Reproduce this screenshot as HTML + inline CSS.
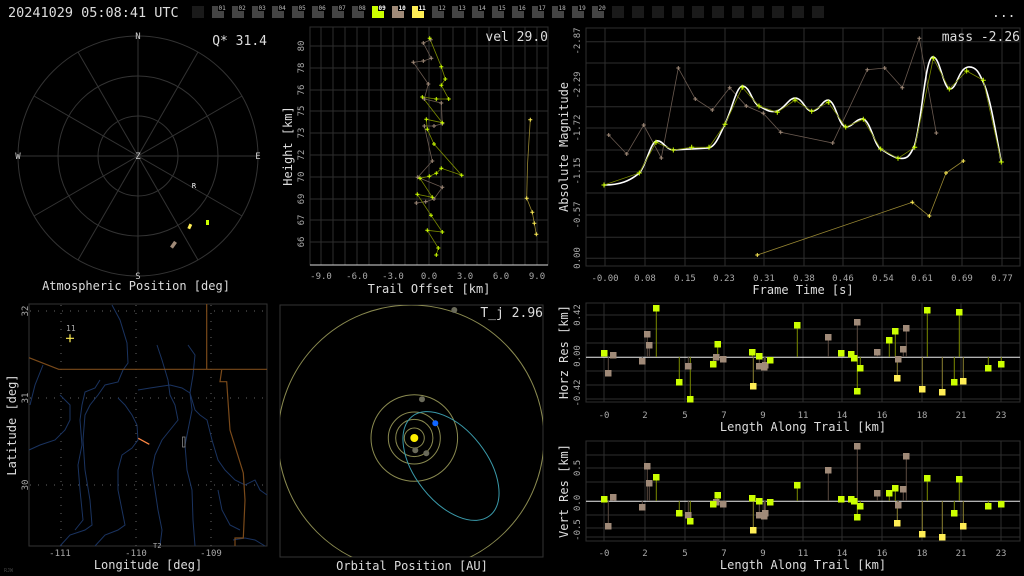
<!DOCTYPE html>
<html><head><meta charset="utf-8"><style>
html,body{margin:0;padding:0;background:#000;}
svg{display:block;}
text{font-family:"DejaVu Sans Mono","Liberation Mono",monospace;}
.t{fill:#aaa;font-size:9px;}
.l{fill:#ddd;font-size:12px;}
.g{stroke:#2e2e2e;stroke-width:1;fill:none;}
</style></head><body>
<svg width="1024" height="576" viewBox="0 0 1024 576" xmlns="http://www.w3.org/2000/svg">
<rect width="1024" height="576" fill="#000"/>
<!-- top bar -->
<text x="8" y="17" fill="#ddd" font-size="13.5">20241029 05:08:41 UTC</text>
<g>
<rect x="192" y="6" width="12" height="12" fill="#1a1a1a"/>
<g fill="#444">
<rect x="212" y="6" width="12" height="12"/><rect x="232" y="6" width="12" height="12"/><rect x="252" y="6" width="12" height="12"/><rect x="272" y="6" width="12" height="12"/><rect x="292" y="6" width="12" height="12"/><rect x="312" y="6" width="12" height="12"/><rect x="332" y="6" width="12" height="12"/><rect x="352" y="6" width="12" height="12"/>
<rect x="432" y="6" width="12" height="12"/><rect x="452" y="6" width="12" height="12"/><rect x="472" y="6" width="12" height="12"/><rect x="492" y="6" width="12" height="12"/><rect x="512" y="6" width="12" height="12"/><rect x="532" y="6" width="12" height="12"/><rect x="552" y="6" width="12" height="12"/><rect x="572" y="6" width="12" height="12"/><rect x="592" y="6" width="12" height="12"/>
</g>
<rect x="372" y="6" width="12" height="12" fill="#ccff00"/>
<rect x="392" y="6" width="12" height="12" fill="#a08a78"/>
<rect x="412" y="6" width="12" height="12" fill="#ffee55"/>
<g fill="#1a1a1a">
<rect x="612" y="6" width="12" height="12"/><rect x="632" y="6" width="12" height="12"/><rect x="652" y="6" width="12" height="12"/><rect x="672" y="6" width="12" height="12"/><rect x="692" y="6" width="12" height="12"/><rect x="712" y="6" width="12" height="12"/><rect x="732" y="6" width="12" height="12"/><rect x="752" y="6" width="12" height="12"/><rect x="772" y="6" width="12" height="12"/><rect x="792" y="6" width="12" height="12"/><rect x="812" y="6" width="12" height="12"/>
</g>
<g fill="#000">
<rect x="218" y="4" width="9" height="7"/><rect x="238" y="4" width="9" height="7"/><rect x="258" y="4" width="9" height="7"/><rect x="278" y="4" width="9" height="7"/><rect x="298" y="4" width="9" height="7"/><rect x="318" y="4" width="9" height="7"/><rect x="338" y="4" width="9" height="7"/><rect x="358" y="4" width="9" height="7"/><rect x="378" y="4" width="9" height="7"/><rect x="398" y="4" width="9" height="7"/><rect x="418" y="4" width="9" height="7"/><rect x="438" y="4" width="9" height="7"/><rect x="458" y="4" width="9" height="7"/><rect x="478" y="4" width="9" height="7"/><rect x="498" y="4" width="9" height="7"/><rect x="518" y="4" width="9" height="7"/><rect x="538" y="4" width="9" height="7"/><rect x="558" y="4" width="9" height="7"/><rect x="578" y="4" width="9" height="7"/><rect x="598" y="4" width="9" height="7"/>
</g>
<g fill="#bbb" font-size="6px">
<text x="218.5" y="10">01</text><text x="238.5" y="10">02</text><text x="258.5" y="10">03</text><text x="278.5" y="10">04</text><text x="298.5" y="10">05</text><text x="318.5" y="10">06</text><text x="338.5" y="10">07</text><text x="358.5" y="10">08</text>
<text x="378.5" y="10" fill="#fff" font-weight="bold">09</text><text x="398.5" y="10" fill="#fff" font-weight="bold">10</text><text x="418.5" y="10" fill="#fff" font-weight="bold">11</text>
<text x="438.5" y="10">12</text><text x="458.5" y="10">13</text><text x="478.5" y="10">14</text><text x="498.5" y="10">15</text><text x="518.5" y="10">16</text><text x="538.5" y="10">17</text><text x="558.5" y="10">18</text><text x="578.5" y="10">19</text><text x="598.5" y="10">20</text>
</g>
<text x="992" y="17" fill="#ddd" font-size="13">...</text>
</g>

<!-- Panel 1 polar -->
<g stroke="#333" fill="none" stroke-width="1">
<circle cx="138" cy="156" r="40"/><circle cx="138" cy="156" r="80"/><circle cx="138" cy="156" r="120"/>
<line x1="138" y1="36" x2="138" y2="276"/><line x1="18" y1="156" x2="258" y2="156"/>
<line x1="78" y1="52" x2="198" y2="260"/><line x1="198" y1="52" x2="78" y2="260"/>
<line x1="34" y1="96" x2="242" y2="216"/><line x1="34" y1="216" x2="242" y2="96"/>
</g>
<g fill="#ccc" font-size="9px" text-anchor="middle">
<text x="138" y="39">N</text><text x="138" y="279">S</text><text x="18" y="159">W</text><text x="258" y="159">E</text><text x="138" y="159">Z</text>
<text x="194" y="188" font-size="7px" fill="#fff">R</text>
</g>
<rect x="206" y="220" width="3" height="5" fill="#ccff00"/>
<rect x="188.5" y="224" width="3" height="5" fill="#ffee55" transform="rotate(25 190 226)"/>
<rect x="171.5" y="241" width="3.5" height="7" fill="#a08a78" transform="rotate(35 173 245)"/>
<text x="267" y="45" fill="#ddd" font-size="13" text-anchor="end">Q* 31.4</text>
<text x="136" y="290" class="l" text-anchor="middle">Atmospheric Position [deg]</text>

<!-- Panel 2 trail offset -->
<rect x="310" y="27" width="238" height="238" fill="none" stroke="#2e2e2e"/>
<g class="g">
<path d="M321,27V265M333,27V265M345,27V265M357,27V265M369,27V265M381,27V265M393,27V265M405,27V265M417,27V265M429,27V265M441,27V265M453,27V265M465,27V265M477,27V265M489,27V265M501,27V265M513,27V265M525,27V265M537,27V265"/>
<path d="M310,46H548M310,68H548M310,90H548M310,111H548M310,133H548M310,155H548M310,177H548M310,199H548M310,220H548M310,242H548"/>
</g>
<line x1="310" y1="265" x2="548" y2="265" stroke="#ddd"/>
<g class="t" text-anchor="middle">
<text x="321" y="279">-9.0</text><text x="357" y="279">-6.0</text><text x="393" y="279">-3.0</text><text x="429" y="279">0.0</text><text x="465" y="279">3.0</text><text x="501" y="279">6.0</text><text x="537" y="279">9.0</text>
</g>
<g class="t" text-anchor="middle">
<text transform="translate(304,46) rotate(-90)">80</text><text transform="translate(304,68) rotate(-90)">78</text><text transform="translate(304,90) rotate(-90)">76</text><text transform="translate(304,111) rotate(-90)">75</text><text transform="translate(304,133) rotate(-90)">73</text><text transform="translate(304,155) rotate(-90)">72</text><text transform="translate(304,177) rotate(-90)">70</text><text transform="translate(304,199) rotate(-90)">69</text><text transform="translate(304,220) rotate(-90)">67</text><text transform="translate(304,242) rotate(-90)">66</text>
</g>
<text transform="translate(292,146) rotate(-90)" class="l" text-anchor="middle">Height [km]</text>
<text x="429" y="293" class="l" text-anchor="middle">Trail Offset [km]</text>
<polyline fill="none" stroke="#6a5a50" stroke-width="0.8" points="430.7,39.7 423.3,43 431.3,58.3 423.3,61 413.3,62.3 428.3,84 424.3,99 441.3,103 442.3,123.7 434,126 424.3,126 432.3,161 417.7,177.3 442.3,187.3 434,199 425.7,201.7 416.3,203"/>
<polyline fill="none" stroke="#7a8a00" stroke-width="0.8" points="429.7,38.3 441.3,66.7 445.3,79 441.3,85.3 448.7,99 436.3,99 422.3,97 442.3,122.7 426.3,119.3 427.3,129.3 434,144 461.7,175.3 441.3,168.3 436.3,173.3 429.3,176.3 420,178.3 432.3,197.3 417.3,194.3 431,215.3 442.3,232 427.3,230.3 438.3,248 436.3,255"/>
<polyline fill="none" stroke="#998833" stroke-width="0.8" points="530.3,119.7 529,140 527.5,165 526.7,198.3 532.3,212.3 534.3,223.3 536.3,234.3"/>
<g stroke-width="1" fill="none">
<path stroke="#a08a78" d="M428.7,39.7h4M430.7,37.7v4M421.3,43h4M423.3,41v4M429.3,58.3h4M431.3,56.3v4M421.3,61h4M423.3,59v4M411.3,62.3h4M413.3,60.3v4M426.3,84h4M428.3,82v4M422.3,99h4M424.3,97v4M439.3,103h4M441.3,101v4M440.3,123.7h4M442.3,121.7v4M432,126h4M434,124v4M422.3,126h4M424.3,124v4M430.3,161h4M432.3,159v4M415.7,177.3h4M417.7,175.3v4M440.3,187.3h4M442.3,185.3v4M432,199h4M434,197v4M423.7,201.7h4M425.7,199.7v4M414.3,203h4M416.3,201v4"/>
<path stroke="#ccff00" d="M427.7,38.3h4M429.7,36.3v4M439.3,66.7h4M441.3,64.7v4M443.3,79h4M445.3,77v4M439.3,85.3h4M441.3,83.3v4M446.7,99h4M448.7,97v4M434.3,99h4M436.3,97v4M420.3,97h4M422.3,95v4M440.3,122.7h4M442.3,120.7v4M424.3,119.3h4M426.3,117.3v4M425.3,129.3h4M427.3,127.3v4M432,144h4M434,142v4M459.7,175.3h4M461.7,173.3v4M439.3,168.3h4M441.3,166.3v4M434.3,173.3h4M436.3,171.3v4M427.3,176.3h4M429.3,174.3v4M418,178.3h4M420,176.3v4M430.3,197.3h4M432.3,195.3v4M415.3,194.3h4M417.3,192.3v4M429,215.3h4M431,213.3v4M440.3,232h4M442.3,230v4M425.3,230.3h4M427.3,228.3v4M436.3,248h4M438.3,246v4M434.3,255h4M436.3,253v4"/>
<path stroke="#ffee55" d="M528.3,119.7h4M530.3,117.7v4M524.7,198.3h4M526.7,196.3v4M530.3,212.3h4M532.3,210.3v4M532.3,223.3h4M534.3,221.3v4M534.3,234.3h4M536.3,232.3v4"/>
</g>
<text x="548" y="41" fill="#ddd" font-size="13" text-anchor="end">vel 29.0</text>

<!-- Panel 3 magnitude -->
<rect x="586" y="28" width="434" height="238" fill="none" stroke="#2e2e2e"/>
<g class="g">
<path d="M605,28V266M645,28V266M685,28V266M725,28V266M764,28V266M804,28V266M843,28V266M883,28V266M922,28V266M962,28V266M1002,28V266"/>
<path d="M586,41.7H1020M586,63H1020M586,85H1020M586,106.7H1020M586,128H1020M586,150H1020M586,171.7H1020M586,193H1020M586,215H1020M586,237.3H1020M586,258.3H1020"/>
</g>
<g class="t" text-anchor="middle">
<text x="605" y="281">-0.00</text><text x="645" y="281">0.08</text><text x="685" y="281">0.15</text><text x="724" y="281">0.23</text><text x="764" y="281">0.31</text><text x="804" y="281">0.38</text><text x="843" y="281">0.46</text><text x="883" y="281">0.54</text><text x="922" y="281">0.61</text><text x="962" y="281">0.69</text><text x="1002" y="281">0.77</text>
<text transform="translate(580,41) rotate(-90)">-2.87</text><text transform="translate(580,85) rotate(-90)">-2.29</text><text transform="translate(580,128) rotate(-90)">-1.72</text><text transform="translate(580,171) rotate(-90)">-1.15</text><text transform="translate(580,215) rotate(-90)">-0.57</text><text transform="translate(580,258) rotate(-90)">0.00</text>
</g>
<text transform="translate(568,147) rotate(-90)" class="l" text-anchor="middle">Absolute Magnitude</text>
<text x="803" y="294" class="l" text-anchor="middle">Frame Time [s]</text>
<polyline fill="none" stroke="#6a5a50" stroke-width="0.8" points="608.7,135 626.7,154 643.7,125 661.3,158 678.3,68 695.3,99 712.3,110 729.7,87.7 746.3,106 763.3,113.3 780.7,132.3 832.7,143 867.3,69.7 884.7,68 902.3,87.7 919.3,38.3 936.3,133"/>
<polyline fill="none" stroke="#998833" stroke-width="0.8" points="757.3,255 912.3,202.3 929.3,216 946,173 963.3,161"/>
<path fill="none" stroke="#fff" stroke-width="1.6" stroke-linejoin="round" d="M604,185 C620,185 630,181 639.3,173 C646,166 650,144 656,141 C662,139 666,150 673.3,150 L709,148 C716,146 720,134 725,124 C732,110 736,87 742.3,86 C750,86 752,103 759,106 C767,110 770,113 777.3,111 C785,108 789,98 795,98 C803,98 805,111 811.7,111 C820,111 822,100 828.3,100 C836,102 838,125 845.7,127 C853,127 856,118 863.3,119 C871,122 874,145 880.7,149 C888,153 890,156 898,158 C907,160 910,156 914.7,145 C922,120 925,60 932.3,57 C940,55 943,89 950,89 C957,89 958,69 968,67 C977,66 980,75 984,84 C991,100 997,140 1001.3,162"/>
<polyline fill="none" stroke="#7a8a00" stroke-width="0.8" points="604,185 639.3,173 656,142.3 673.3,150 691.7,147.3 709,147.3 725,124.3 742.3,87.3 759,106 777.3,112.3 795,100 811.7,111.3 828.3,102.3 845.7,127 863.3,119.3 880.7,149 898,158.3 914.7,147.3 933.3,58.3 949.3,89 966.7,71 983.3,80.3 1001.3,162"/>
<g fill="none" stroke-width="1">
<path stroke="#a08a78" d="M606.7,135h4M608.7,133v4M624.7,154h4M626.7,152v4M641.7,125h4M643.7,123v4M659.3,158h4M661.3,156v4M676.3,68h4M678.3,66v4M693.3,99h4M695.3,97v4M710.3,110h4M712.3,108v4M727.7,87.7h4M729.7,85.7v4M744.3,106h4M746.3,104v4M761.3,113.3h4M763.3,111.3v4M778.7,132.3h4M780.7,130.3v4M830.7,143h4M832.7,141v4M865.3,69.7h4M867.3,67.7v4M882.7,68h4M884.7,66v4M900.3,87.7h4M902.3,85.7v4M917.3,38.3h4M919.3,36.3v4M934.3,133h4M936.3,131v4"/>
<path stroke="#ccff00" d="M601.5,185h5M604,182.5v5M636.8,173h5M639.3,170.5v5M653.5,142.3h5M656,139.8v5M670.8,150h5M673.3,147.5v5M689.2,147.3h5M691.7,144.8v5M706.5,147.3h5M709,144.8v5M722.5,124.3h5M725,121.8v5M739.8,87.3h5M742.3,84.8v5M756.5,106h5M759,103.5v5M774.8,112.3h5M777.3,109.8v5M792.5,100h5M795,97.5v5M809.2,111.3h5M811.7,108.8v5M825.8,102.3h5M828.3,99.8v5M843.2,127h5M845.7,124.5v5M860.8,119.3h5M863.3,116.8v5M878.2,149h5M880.7,146.5v5M895.5,158.3h5M898,155.8v5M912.2,147.3h5M914.7,144.8v5M930.8,58.3h5M933.3,55.8v5M946.8,89h5M949.3,86.5v5M964.2,71h5M966.7,68.5v5M980.8,80.3h5M983.3,77.8v5M998.8,162h5M1001.3,159.5v5"/>
<path stroke="#ffee55" d="M755.3,255h4M757.3,253v4M910.3,202.3h4M912.3,200.3v4M927.3,216h4M929.3,214v4M944,173h4M946,171v4M961.3,161h4M963.3,159v4"/>
</g>
<text x="1020" y="41" fill="#ddd" font-size="13" text-anchor="end">mass -2.26</text>

<!-- Panel 4 map -->
<rect x="29" y="304" width="238" height="242" fill="none" stroke="#333"/>
<g stroke="#666" stroke-dasharray="1 7" stroke-width="1">
<path d="M61,305V546M136,305V546M211,305V546M30,311H267M30,398H267M30,485H267"/>
</g>
<g fill="none" stroke="#1a3360" stroke-width="1">
<path d="M112,305 L120,320 L127,343 L128,363 L123,370 L118,382 L105,385 L98,395 L90,405 L85,415 L83,440 L85,470 L90,500 L92,525 L85,530 L70,535 L60,546"/>
<path d="M29,450 L40,445 L55,440 L65,430 L70,420 L70,405 L65,400 L60,395"/>
<path d="M30,405 L35,385 L43,365"/>
<path d="M118,398 L125,405 L132,415 L137,425 L138,440 L132,448 L122,455 L118,470 L118,490 L122,510 L125,525 L118,530 L105,535 L95,546"/>
<path d="M157,345 L162,360 L168,380 L170,395 L175,405 L178,420 L170,430 L162,440 L155,455 L152,470 L155,490 L158,510 L162,530 L160,546"/>
<path d="M138,390 L150,388 L170,385 L182,388 L190,393 L192,410 L188,430 L185,445 L187,470 L192,490 L193,520 L195,546"/>
<path d="M188,345 L195,355 L193,375 L190,393"/>
<path d="M190,393 L195,410 L200,415 L207,420 L212,440 L218,460 L225,470 L235,480 L245,485 L255,480 L260,490 L267,495"/>
<path d="M233,540 L245,538 L255,540 L265,546"/>
<path d="M218,490 L222,510 L230,525 L240,530"/>
<path d="M100,380 L95,388 L85,392 L82,405 L80,420 L82,445 L78,465 L80,490 L83,520 L75,530"/>
</g>
<g fill="none" stroke="#7a4a1a" stroke-width="1.2">
<path d="M29,357.7 L58.7,369.3 H267"/>
<path d="M206.7,304 V369.3"/>
<path d="M221.7,370 L220,381.7 L226.7,381.7 L230,430 L243.3,473 L245,500 L243.3,538 L235,538 L235,546"/>
</g>
<line x1="138.3" y1="438.3" x2="149.3" y2="444.3" stroke="#ff8844" stroke-width="1.3"/>
<path d="M66,338.3h8M70,334.3v8" stroke="#ffee55" stroke-width="1.2"/>
<text x="66" y="331" fill="#aaa" font-size="8">11</text>
<rect x="182.5" y="437" width="2.5" height="10" fill="none" stroke="#888" stroke-width="0.8"/>
<text x="153" y="548" fill="#aaa" font-size="7">T2</text>
<g class="t" text-anchor="middle">
<text x="60" y="556">-111</text><text x="136" y="556">-110</text><text x="211" y="556">-109</text>
<text transform="translate(28,311) rotate(-90)">32</text><text transform="translate(28,398) rotate(-90)">31</text><text transform="translate(28,485) rotate(-90)">30</text>
</g>
<text transform="translate(16,425) rotate(-90)" class="l" text-anchor="middle">Latitude [deg]</text>
<text x="148" y="569" class="l" text-anchor="middle">Longitude [deg]</text>
<text x="4" y="572" fill="#444" font-size="5">RJW</text>

<!-- Panel 5 orbital -->
<rect x="280" y="305" width="263" height="252" fill="none" stroke="#333"/>
<clipPath id="oc"><rect x="280" y="305" width="263" height="252"/></clipPath>
<g clip-path="url(#oc)" fill="none" stroke="#8a8a50" stroke-width="1">
<circle cx="411" cy="438" r="133"/>
<circle cx="414.3" cy="438" r="43.3"/>
<circle cx="414.3" cy="438" r="26"/>
<circle cx="414.3" cy="438" r="18.6"/>
<circle cx="414.3" cy="438" r="10"/>
<ellipse cx="451" cy="466" rx="63" ry="36" stroke="#3a9aaa" transform="rotate(52 451 466)"/>
</g>
<g fill="#6a6a5a">
<circle cx="454.3" cy="310" r="3"/><circle cx="422" cy="399.3" r="3"/><circle cx="426.3" cy="453.3" r="3"/><circle cx="415.3" cy="450.3" r="3"/>
</g>
<circle cx="414.3" cy="438" r="4" fill="#ffee00"/>
<circle cx="435.3" cy="423.3" r="3" fill="#1166ff"/>
<text x="543" y="317" fill="#ddd" font-size="13" text-anchor="end">T_j 2.96</text>
<text x="412" y="570" class="l" text-anchor="middle">Orbital Position [AU]</text>

<!-- Panel 6 horz res -->
<rect x="586" y="303" width="434" height="99" fill="none" stroke="#2e2e2e"/>
<g class="g">
<path d="M604,303V402M645,303V402M685,303V402M724,303V402M763,303V402M803,303V402M842,303V402M882,303V402M922,303V402M961,303V402M1001,303V402"/>
<path d="M586,315H1020M586,329H1020M586,343H1020M586,371H1020M586,385H1020M586,399H1020"/>
</g>
<line x1="586" y1="357.3" x2="1020" y2="357.3" stroke="#eee"/>
<g class="t" text-anchor="middle">
<text x="604" y="418">-0</text><text x="645" y="418">2</text><text x="685" y="418">5</text><text x="724" y="418">7</text><text x="763" y="418">9</text><text x="803" y="418">11</text><text x="842" y="418">14</text><text x="882" y="418">16</text><text x="922" y="418">18</text><text x="961" y="418">21</text><text x="1001" y="418">23</text>
<text transform="translate(580,315) rotate(-90)">0.42</text><text transform="translate(580,356) rotate(-90)">0.00</text><text transform="translate(580,393) rotate(-90)">-0.42</text>
</g>
<text transform="translate(568,352) rotate(-90)" class="l" text-anchor="middle">Horz Res [km]</text>
<text x="803" y="431" class="l" text-anchor="middle">Length Along Trail [km]</text>
<path stroke="#5a4a40" fill="none" d="M608.3,357V373.3M613.3,357V355.3M642.3,357V361.3M647.3,357V334.3M649.3,357V345.3M688.3,357V366.3M716.3,357V357.3M723.3,357V359.3M759.3,357V366.3M764.3,357V367.3M765.3,357V365.3M828.3,357V337.3M857.3,357V322.3M877.3,357V352.3M898.3,357V359.3M903.3,357V349.3M906.3,357V328.3"/>
<path stroke="#7a8a00" fill="none" d="M604.3,357V353.3M656.3,357V308.3M679.3,357V382.3M690.3,357V399.3M713.3,357V364.3M717.7,357V344.3M752.3,357V352.3M759.3,357V356.3M770.3,357V360.3M797.3,357V325.3M841.3,357V353.3M851.3,357V354.3M854.3,357V358.3M857.3,357V391.3M860.3,357V368.3M889.3,357V340.3M895.3,357V331.3M927.3,357V310.3M954.3,357V382.3M959.3,357V312.3M988.3,357V368.3M1001.3,357V364.3"/>
<path stroke="#8a8030" fill="none" d="M753.3,357V386.3M897.3,357V378.3M922.3,357V389.3M942.3,357V392.3M963.3,357V381.3"/>
<g fill="#a08a78">
<rect x="605" y="370" width="6.5" height="6.5"/><rect x="610" y="352" width="6.5" height="6.5"/><rect x="639" y="358" width="6.5" height="6.5"/><rect x="644" y="331" width="6.5" height="6.5"/><rect x="646" y="342" width="6.5" height="6.5"/><rect x="685" y="363" width="6.5" height="6.5"/><rect x="713" y="354" width="6.5" height="6.5"/><rect x="720" y="356" width="6.5" height="6.5"/><rect x="756" y="363" width="6.5" height="6.5"/><rect x="761" y="364" width="6.5" height="6.5"/><rect x="762" y="362" width="6.5" height="6.5"/><rect x="825" y="334" width="6.5" height="6.5"/><rect x="854" y="319" width="6.5" height="6.5"/><rect x="874" y="349" width="6.5" height="6.5"/><rect x="895" y="356" width="6.5" height="6.5"/><rect x="900" y="346" width="6.5" height="6.5"/><rect x="903" y="325" width="6.5" height="6.5"/>
</g>
<g fill="#ccff00">
<rect x="601" y="350" width="6.5" height="6.5"/><rect x="653" y="305" width="6.5" height="6.5"/><rect x="676" y="379" width="6.5" height="6.5"/><rect x="687" y="396" width="6.5" height="6.5"/><rect x="710" y="361" width="6.5" height="6.5"/><rect x="714.5" y="341" width="6.5" height="6.5"/><rect x="749" y="349" width="6.5" height="6.5"/><rect x="756" y="353" width="6.5" height="6.5"/><rect x="767" y="357" width="6.5" height="6.5"/><rect x="794" y="322" width="6.5" height="6.5"/><rect x="838" y="350" width="6.5" height="6.5"/><rect x="848" y="351" width="6.5" height="6.5"/><rect x="851" y="355" width="6.5" height="6.5"/><rect x="854" y="388" width="6.5" height="6.5"/><rect x="857" y="365" width="6.5" height="6.5"/><rect x="886" y="337" width="6.5" height="6.5"/><rect x="892" y="328" width="6.5" height="6.5"/><rect x="924" y="307" width="6.5" height="6.5"/><rect x="951" y="379" width="6.5" height="6.5"/><rect x="956" y="309" width="6.5" height="6.5"/><rect x="985" y="365" width="6.5" height="6.5"/><rect x="998" y="361" width="6.5" height="6.5"/>
</g>
<g fill="#ffee55">
<rect x="750" y="383" width="6.5" height="6.5"/><rect x="894" y="375" width="6.5" height="6.5"/><rect x="919" y="386" width="6.5" height="6.5"/><rect x="939" y="389" width="6.5" height="6.5"/><rect x="960" y="378" width="6.5" height="6.5"/>
</g>

<!-- Panel 7 vert res -->
<rect x="586" y="441" width="434" height="100" fill="none" stroke="#2e2e2e"/>
<g class="g">
<path d="M604,441V541M645,441V541M685,441V541M724,441V541M763,441V541M803,441V541M842,441V541M882,441V541M922,441V541M961,441V541M1001,441V541"/>
<path d="M586,455H1020M586,468H1020M586,482H1020M586,515H1020M586,528H1020M586,537H1020"/>
</g>
<line x1="586" y1="501.3" x2="1020" y2="501.3" stroke="#eee"/>
<g class="t" text-anchor="middle">
<text x="604" y="556">-0</text><text x="645" y="556">2</text><text x="685" y="556">5</text><text x="724" y="556">7</text><text x="763" y="556">9</text><text x="803" y="556">11</text><text x="842" y="556">14</text><text x="882" y="556">16</text><text x="922" y="556">18</text><text x="961" y="556">21</text><text x="1001" y="556">23</text>
<text transform="translate(580,468) rotate(-90)">0.5</text><text transform="translate(580,503) rotate(-90)">0.0</text><text transform="translate(580,530) rotate(-90)">-0.5</text>
</g>
<text transform="translate(568,491) rotate(-90)" class="l" text-anchor="middle">Vert Res [km]</text>
<text x="803" y="569" class="l" text-anchor="middle">Length Along Trail [km]</text>
<path stroke="#5a4a40" fill="none" d="M608.3,501V526.3M613.3,501V497.3M642.3,501V507.3M647.3,501V466.3M649.3,501V483.3M688.3,501V515.3M716.3,501V502.3M723.3,501V504.3M759.3,501V515.3M764.3,501V516.3M765.3,501V513.3M828.3,501V470.3M857.3,501V446.3M877.3,501V493.3M898.3,501V505.3M903.3,501V489.3M906.3,501V456.3"/>
<path stroke="#7a8a00" fill="none" d="M604.3,501V499.3M656.3,501V477.3M679.3,501V513.3M690.3,501V521.3M713.3,501V504M717.7,501V495.7M752.3,501V498.3M759.3,501V501.3M770.3,501V502.3M797.3,501V485.3M841.3,501V499.3M851.3,501V499.3M854.3,501V501.3M857.3,501V517.3M860.3,501V506.3M889.3,501V493.3M895.3,501V488.3M927.3,501V478.3M954.3,501V513.3M959.3,501V479.3M988.3,501V506.3M1001.3,501V504.3"/>
<path stroke="#8a8030" fill="none" d="M753.3,501V530.3M897.3,501V523.3M922.3,501V534.3M942.3,501V537.3M963.3,501V526.3"/>
<g fill="#a08a78">
<rect x="605" y="523" width="6.5" height="6.5"/><rect x="610" y="494" width="6.5" height="6.5"/><rect x="639" y="504" width="6.5" height="6.5"/><rect x="644" y="463" width="6.5" height="6.5"/><rect x="646" y="480" width="6.5" height="6.5"/><rect x="685" y="512" width="6.5" height="6.5"/><rect x="713" y="499" width="6.5" height="6.5"/><rect x="720" y="501" width="6.5" height="6.5"/><rect x="756" y="512" width="6.5" height="6.5"/><rect x="761" y="513" width="6.5" height="6.5"/><rect x="762" y="510" width="6.5" height="6.5"/><rect x="825" y="467" width="6.5" height="6.5"/><rect x="854" y="443" width="6.5" height="6.5"/><rect x="874" y="490" width="6.5" height="6.5"/><rect x="895" y="502" width="6.5" height="6.5"/><rect x="900" y="486" width="6.5" height="6.5"/><rect x="903" y="453" width="6.5" height="6.5"/>
</g>
<g fill="#ccff00">
<rect x="601" y="496" width="6.5" height="6.5"/><rect x="653" y="474" width="6.5" height="6.5"/><rect x="676" y="510" width="6.5" height="6.5"/><rect x="687" y="518" width="6.5" height="6.5"/><rect x="710" y="501" width="6.5" height="6.5"/><rect x="714.5" y="492" width="6.5" height="6.5"/><rect x="749" y="495" width="6.5" height="6.5"/><rect x="756" y="498" width="6.5" height="6.5"/><rect x="767" y="499" width="6.5" height="6.5"/><rect x="794" y="482" width="6.5" height="6.5"/><rect x="838" y="496" width="6.5" height="6.5"/><rect x="848" y="496" width="6.5" height="6.5"/><rect x="851" y="498" width="6.5" height="6.5"/><rect x="854" y="514" width="6.5" height="6.5"/><rect x="857" y="503" width="6.5" height="6.5"/><rect x="886" y="490" width="6.5" height="6.5"/><rect x="892" y="485" width="6.5" height="6.5"/><rect x="924" y="475" width="6.5" height="6.5"/><rect x="951" y="510" width="6.5" height="6.5"/><rect x="956" y="476" width="6.5" height="6.5"/><rect x="985" y="503" width="6.5" height="6.5"/><rect x="998" y="501" width="6.5" height="6.5"/>
</g>
<g fill="#ffee55">
<rect x="750" y="527" width="6.5" height="6.5"/><rect x="894" y="520" width="6.5" height="6.5"/><rect x="919" y="531" width="6.5" height="6.5"/><rect x="939" y="534" width="6.5" height="6.5"/><rect x="960" y="523" width="6.5" height="6.5"/>
</g>
</svg>
</body></html>
